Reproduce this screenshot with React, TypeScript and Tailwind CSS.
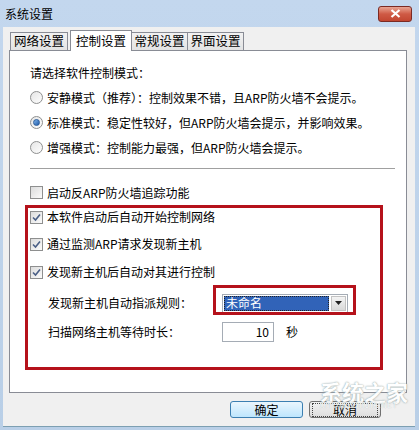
import React from 'react';

// 系统设置 dialog, "控制设置" tab
const tabs = ['网络设置', '控制设置', '常规设置', '界面设置'];
const tabWidths = ['w-[58px]', 'w-[62px]', 'w-[57px]', 'w-[57px]'];

function Radio({ checked }: { checked?: boolean }) {
  return (
    <span className="w-[13px] h-[13px] rounded-full border border-[#8e8f8f] bg-gradient-to-br from-[#e6e6e6] to-[#fdfdfd] flex items-center justify-center shrink-0">
      {checked && (
        <span className="w-[7px] h-[7px] rounded-full bg-gradient-to-br from-[#7fb3ea] to-[#1d5aa8] border border-[#2a5c9a]" />
      )}
    </span>
  );
}

function Check({ checked }: { checked?: boolean }) {
  return (
    <span className="w-[13px] h-[13px] border border-[#8e8f8f] bg-gradient-to-br from-[#dcdcdc] to-[#fbfbfb] flex items-center justify-center shrink-0">
      {checked && (
        <svg width="9" height="9" viewBox="0 0 9 9">
          <path d="M1 4.5 L3.5 7 L8 1.5" stroke="#4a5f86" strokeWidth="1.6" fill="none" />
        </svg>
      )}
    </span>
  );
}

function Row({ children, className = '' }: { children: React.ReactNode; className?: string }) {
  return <div className={`flex items-center gap-[4px] ${className}`}>{children}</div>;
}

export default function App() {
  return (
    <div className="w-[419px] h-[430px] relative overflow-hidden bg-gradient-to-b from-[#c3d7ee] to-[#b9cfe7] font-['Noto_Sans_CJK_SC','Liberation_Sans',sans-serif] text-[12px] text-black leading-none">
      {/* title bar */}
      <div className="h-[27px] flex items-center justify-between pl-[5px] pr-[7px]">
        <span className="text-[12px]">系统设置</span>
        <div className="w-[34px] h-[16px] rounded-[3px] border border-[#7b2a23] bg-gradient-to-b from-[#e8a493] via-[#cf5a45] to-[#c24631] flex items-center justify-center">
          <svg width="11" height="9" viewBox="0 0 11 9">
            <path d="M1.5 1 L9.5 8 M9.5 1 L1.5 8" stroke="#fff" strokeWidth="2.2" />
          </svg>
        </div>
      </div>

      {/* client area */}
      <div className="ml-[3px] mr-[4px] h-[400px] bg-[#f0f0f0] flex flex-col border-b border-[#7c9fb2]">
        {/* tabs */}
        <div className="flex items-end h-[23px] pl-[7px] relative z-10">
          {tabs.map((t, i) =>
            i === 1 ? (
              <div
                key={t}
                className={`${tabWidths[i]} h-[21px] -mb-px bg-white border border-b-0 border-[#898c95] flex items-center justify-center text-[12.5px]`}
              >
                {t}
              </div>
            ) : (
              <div
                key={t}
                className={`${tabWidths[i]} h-[18px] bg-gradient-to-b from-[#f2f2f2] to-[#e3e3e3] border border-b-0 border-[#898c95] flex items-center justify-center text-[12.5px] ${i === 0 ? 'mr-[2px]' : 'ml-[-1px]'}`}
              >
                {t}
              </div>
            )
          )}
        </div>

        {/* tab panel */}
        <div className="ml-[6px] w-[398px] h-[343px] bg-white border border-[#898c95] pt-[9px] pl-[20px] flex flex-col">
          <Row className="h-[25px]">
            <span>请选择软件控制模式：</span>
          </Row>
          <Row className="h-[25px]">
            <Radio />
            <span>安静模式（推荐）：控制效果不错，且ARP防火墙不会提示。</span>
          </Row>
          <Row className="h-[25px]">
            <Radio checked />
            <span>标准模式：稳定性较好，但ARP防火墙会提示，并影响效果。</span>
          </Row>
          <Row className="h-[25px]">
            <Radio />
            <span>增强模式：控制能力最强，但ARP防火墙会提示。</span>
          </Row>

          <div className="mt-[8px] w-[365px] h-px bg-[#a0a0a0]" />

          <Row className="h-[25px] mt-[11px]">
            <Check />
            <span>启动反ARP防火墙追踪功能</span>
          </Row>

          {/* highlighted group */}
          <div className="ml-[-5px] w-[358px] h-[165px] border-[3px] border-[#b5121b] pl-[2px] flex flex-col">
            <Row className="h-[18px]">
              <Check checked />
              <span>本软件启动后自动开始控制网络</span>
            </Row>
            <Row className="h-[20px] mt-[8px]">
              <Check checked />
              <span>通过监测ARP请求发现新主机</span>
            </Row>
            <Row className="h-[20px] mt-[8px]">
              <Check checked />
              <span>发现新主机后自动对其进行控制</span>
            </Row>

            <div className="flex items-center h-[20px] mt-[11px] pl-[18px]">
              <span className="w-[174px]">发现新主机自动指派规则：</span>
              <div className="relative w-[126px] h-[19px] border border-[#a5acb5] bg-white flex items-stretch">
                <div className="flex-1 m-[1px] bg-[#3163b8] outline-1 outline-dotted outline-[#222] -outline-offset-1 text-white flex items-center pl-[2px]">
                  未命名
                </div>
                <div className="w-[15px] m-[1px] border border-[#c3c3c3] bg-gradient-to-b from-[#f4f4f4] to-[#d9d9d9] flex items-center justify-center">
                  <svg width="7" height="4" viewBox="0 0 7 4">
                    <path d="M0 0 H7 L3.5 4 Z" fill="#222" />
                  </svg>
                </div>
                <div className="absolute left-[-10px] right-[-9px] top-[-10px] bottom-[-3px] border-[3px] border-[#b5121b] pointer-events-none" />
              </div>
            </div>

            <div className="flex items-center h-[20px] mt-[9px] pl-[18px]">
              <span className="w-[174px]">扫描网络主机等待时长：</span>
              <div className="w-[52px] h-[20px] border border-[#a5acb5] bg-white flex items-center justify-end pr-[4px]">
                10
              </div>
              <span className="ml-[12px]">秒</span>
            </div>
          </div>
        </div>

        {/* dialog buttons */}
        <div className="flex justify-end gap-[6px] mt-[8px] pr-[34px]">
          <button className="w-[73px] h-[17px] rounded-[3px] border border-[#3c7fb1] bg-gradient-to-b from-[#eaf6fd] to-[#bee6fd] text-[12px] flex items-center justify-center">
            确定
          </button>
          <button className="w-[72px] h-[17px] rounded-[3px] border border-[#707070] bg-gradient-to-b from-[#f2f2f2] to-[#dddddd] text-[12px] flex items-center justify-center">
            <span className="px-[20px] outline-1 outline-dotted outline-[#444]">取消</span>
          </button>
        </div>
      </div>

      {/* site watermark */}
      <div className="absolute left-[320px] top-[380px] flex flex-col items-start opacity-90 pointer-events-none">
        <span className="text-[22px] text-white font-bold [text-shadow:0_0_2px_#9aa,0_0_1px_#9aa]">系统之家</span>
        <span className="text-[7px] text-white tracking-[1px] [text-shadow:0_0_1px_#9aa]">XITONGZHIJIA.NET</span>
      </div>
    </div>
  );
}
